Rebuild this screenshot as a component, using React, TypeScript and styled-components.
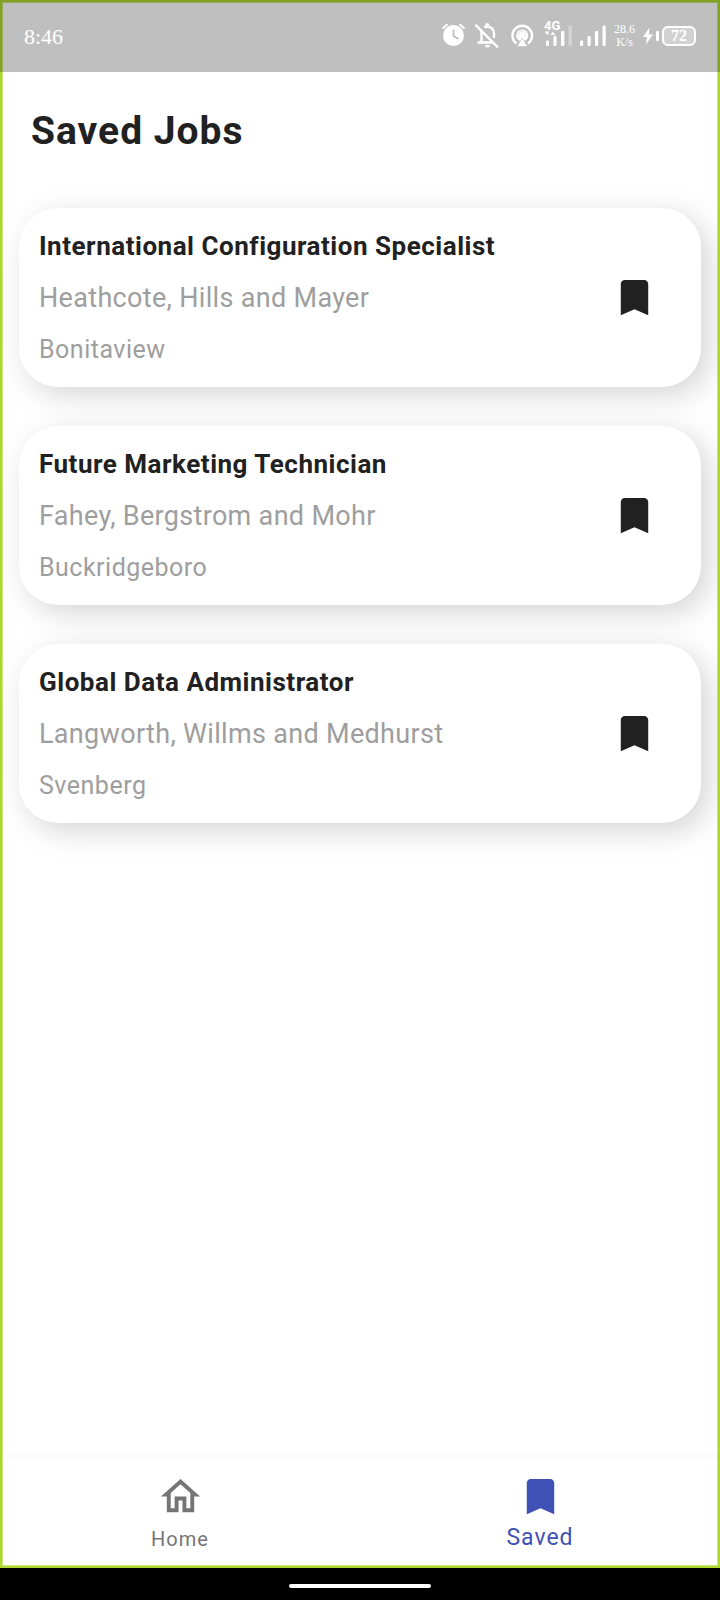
import React, { useState } from "react";
import styled, { createGlobalStyle } from "styled-components";

const GlobalStyle = createGlobalStyle`
  *, *::before, *::after { box-sizing: border-box; }
  body {
    margin: 0;
    background: #fff;
    font-family: Roboto, "Liberation Sans", sans-serif;
    color: #212121;
  }
  h1, h2, p { margin: 0; }
  button { font: inherit; color: inherit; background: none; border: 0; padding: 0; cursor: pointer; }
`;

const Screen = styled.div`
  display: flex;
  flex-direction: column;
  min-height: 100vh;
`;

const StatusBar = styled.header`
  display: flex;
  align-items: center;
  justify-content: space-between;
  height: 72px;
  padding: 0 22px;
  border: 2px solid #81a222;
  border-bottom: 0;
  box-shadow: inset 0 1px #9bab5c, inset 1px 0 #9bab5c, inset -1px 0 #9bab5c;
  background: #bfbfbf;
  color: #fff;
  font-family: "Liberation Serif", serif;
`;

const Clock = styled.time`
  font-size: 22px;
`;

const StatusIcons = styled.div`
  display: flex;
  align-items: center;
  gap: 8px;
  padding-bottom: 2px;
`;

const Speed = styled.span`
  width: 21px;
  font-size: 12px;
  line-height: 13px;
  text-align: center;
`;

const BatteryGroup = styled.span`
  display: flex;
  align-items: center;
  gap: 3px;
`;

const BatteryTip = styled.span`
  width: 3px;
  height: 10px;
  border-radius: 1px;
  background: #fff;
`;

const BatteryBody = styled.span`
  width: 34px;
  height: 20px;
  border: 2px solid #fff;
  border-radius: 6px;
  background: #d2d2d2;
  font-size: 16px;
  font-weight: 700;
  line-height: 16px;
  text-align: center;
`;

const Frame = styled.div`
  flex: 1;
  display: flex;
  flex-direction: column;
  border: 2px solid #acd82d;
  border-top: 0;
  box-shadow: inset 1px 0 #cfe67a, inset -1px 0 #cfe67a, inset 0 -1px #cfe67a;
`;

const Main = styled.main`
  flex: 1;
  overflow: hidden;
  padding: 33px 17px;
`;

const PageTitle = styled.h1`
  padding: 0 12px;
  font-size: 39px;
  font-weight: 700;
  line-height: 52px;
  letter-spacing: 1px;
`;

const JobList = styled.ul`
  display: flex;
  flex-direction: column;
  gap: 39px;
  margin: 51px 0 0;
  padding: 0;
  list-style: none;
`;

const JobCard = styled.li`
  display: flex;
  align-items: center;
  justify-content: space-between;
  padding: 22px 20px 21px;
  border-radius: 39px;
  background: #fff;
  box-shadow: 8px 8px 30px rgba(0, 0, 0, 0.17);
`;

const JobText = styled.div`
  display: flex;
  flex-direction: column;
  gap: 20px;
  line-height: 32px;
  letter-spacing: 0.02em;
`;

const JobTitle = styled.h2`
  font-size: 26px;
  font-weight: 700;
  letter-spacing: 0.02em;
`;

const Company = styled.p`
  font-size: 27px;
  color: #9e9e9e;
`;

const Place = styled.p`
  font-size: 25px;
  letter-spacing: 0.02em;
  color: #9e9e9e;
`;

const SaveButton = styled.button`
  display: flex;
  padding: 0 23px 2px;
`;

const NavBar = styled.nav`
  display: flex;
  height: 108px;
  margin: 0 -2px;
  box-shadow: 0 -4px 8px rgba(0, 0, 0, 0.02);
`;

const NavItem = styled.button<{ $active: boolean }>`
  flex: 1;
  display: flex;
  flex-direction: column;
  align-items: center;
  padding-top: 15px;
  color: ${(p) => (p.$active ? "#3f51b5" : "#757575")};
  font-size: ${(p) => (p.$active ? 23 : 20)}px;
  line-height: ${(p) => (p.$active ? 36 : 38)}px;
  letter-spacing: 1px;
`;

const GestureBar = styled.footer`
  display: flex;
  align-items: center;
  justify-content: center;
  height: 32px;
  padding-top: 4px;
  background: #000;
`;

const GesturePill = styled.span`
  width: 142px;
  height: 4px;
  border-radius: 2px;
  background: #fff;
`;

const BookmarkIcon = () => (
  <svg width="47" height="47" viewBox="0 0 24 24" fill="currentColor" aria-hidden="true">
    <path d="M17 3H7c-1.100 0-2 .9-2 2v16l7-3 7 3V5c0-1.100-.9-2-2-2z" />
  </svg>
);

const HomeIcon = () => (
  <svg width="47" height="47" viewBox="0 0 24 24" fill="currentColor" aria-hidden="true">
    <path d="M12 5.690l5 4.500V18h-2v-6H9v6H7v-7.810l5-4.500M12 3L2 12h3v8h6v-6h2v6h6v-8h3L12 3z" />
  </svg>
);

const AlarmIcon = () => (
  <svg width="26" height="32" viewBox="0 0 26 32" fill="none" stroke="#fff" aria-label="Alarm set">
    <circle cx="13.500" cy="15.500" r="10.500" fill="#fff" stroke="none" />
    <path d="M2.500 8.500l5-4.300M24.500 8.500l-5-4.300" strokeWidth="2" />
    <path d="M13.500 9.500v6.500l5 3" stroke="#bfbfbf" strokeWidth="1.800" />
  </svg>
);

const BellOffIcon = () => (
  <svg width="26" height="32" viewBox="0 0 26 32" fill="none" stroke="#fff" aria-label="Silent">
    <path d="M7.500 11.500v11M20 18v-4.500c0-4-2.500-6.700-6.700-6.700-1.200 0-2.100.2-3 .7M3.500 22.500h16" strokeWidth="2.400" />
    <path d="M11.300 6.500V5a2 2 0 0 1 4 0v1.500zM11 25h5a2.500 2.500 0 0 1-5 0z" fill="#fff" stroke="none" />
    <path d="M1.500 4.800l22.500 22.700" strokeWidth="2.400" />
  </svg>
);

const HotspotIcon = () => (
  <svg width="28" height="32" viewBox="0 0 28 32" fill="none" stroke="#fff" aria-label="Hotspot">
    <path d="M8.500 23.500a9.800 9.800 0 1 1 11.500 0" strokeWidth="2.500" />
    <circle cx="14.200" cy="15.500" r="6" fill="#fff" stroke="none" />
    <path d="M11 16.500a3.700 3.700 0 1 1 6.400 0" stroke="#dcdcdc" strokeWidth=".8" />
    <path d="M14.200 18l5.300 8.500H9z" fill="#fff" stroke="#bfbfbf" strokeWidth=".7" />
  </svg>
);

const MobileDataIcon = () => (
  <svg width="28" height="40" viewBox="0 -4 28 40" fill="#fff" aria-label="4G signal">
    <text x="0" y="10" fontFamily="Roboto, sans-serif" fontSize="13" fontWeight="700">4G</text>
    <path d="M.7 11.500h5L3.200 15zM6.300 15h5L8.800 11.500z" />
    <rect x="2" y="20.500" width="3" height="5.500" rx="1.200" />
    <rect x="9.500" y="16" width="3" height="10" rx="1.200" />
    <rect x="17" y="11" width="3.400" height="15" rx="1.200" />
    <rect x="24.500" y="5.500" width="3.400" height="20.500" rx="1.200" opacity=".35" />
  </svg>
);

const SignalIcon = () => (
  <svg width="26" height="32" viewBox="0 0 26 32" fill="#fff" aria-label="Signal">
    <rect x="0" y="20.500" width="3.200" height="5.500" rx="1.200" />
    <rect x="7.500" y="16" width="3.200" height="10" rx="1.200" />
    <rect x="15" y="11" width="3.200" height="15" rx="1.200" />
    <rect x="22.500" y="5.500" width="3.200" height="20.500" rx="1.200" />
  </svg>
);

const BoltIcon = () => (
  <svg width="10" height="18" viewBox="0 0 10 18" fill="#fff" aria-label="Charging">
    <path d="M6.500 .5L0 10h4l-1 7.500L10 7.500H5.800z" />
  </svg>
);

const jobs = [
  { title: "International Configuration Specialist", company: "Heathcote, Hills and Mayer", place: "Bonitaview" },
  { title: "Future Marketing Technician", company: "Fahey, Bergstrom and Mohr", place: "Buckridgeboro" },
  { title: "Global Data Administrator", company: "Langworth, Willms and Medhurst", place: "Svenberg" },
];

export default function App() {
  const [tab, setTab] = useState("Saved");

  return (
    <Screen>
      <GlobalStyle />
      <StatusBar>
        <Clock>8:46</Clock>
        <StatusIcons>
          <AlarmIcon />
          <BellOffIcon />
          <HotspotIcon />
          <MobileDataIcon />
          <SignalIcon />
          <Speed>28.6 K/s</Speed>
          <BatteryGroup>
            <BoltIcon />
            <BatteryTip />
            <BatteryBody>72</BatteryBody>
          </BatteryGroup>
        </StatusIcons>
      </StatusBar>
      <Frame>
        <Main>
          <PageTitle>Saved Jobs</PageTitle>
          <JobList>
            {jobs.map((job) => (
              <JobCard key={job.title}>
                <JobText>
                  <JobTitle>{job.title}</JobTitle>
                  <Company>{job.company}</Company>
                  <Place>{job.place}</Place>
                </JobText>
                <SaveButton type="button" aria-label={`Remove ${job.title} from saved`}>
                  <BookmarkIcon />
                </SaveButton>
              </JobCard>
            ))}
          </JobList>
        </Main>
        <NavBar>
          <NavItem type="button" $active={tab === "Home"} onClick={() => setTab("Home")}>
            <HomeIcon />
            Home
          </NavItem>
          <NavItem type="button" $active={tab === "Saved"} onClick={() => setTab("Saved")}>
            <BookmarkIcon />
            Saved
          </NavItem>
        </NavBar>
      </Frame>
      <GestureBar>
        <GesturePill />
      </GestureBar>
    </Screen>
  );
}
